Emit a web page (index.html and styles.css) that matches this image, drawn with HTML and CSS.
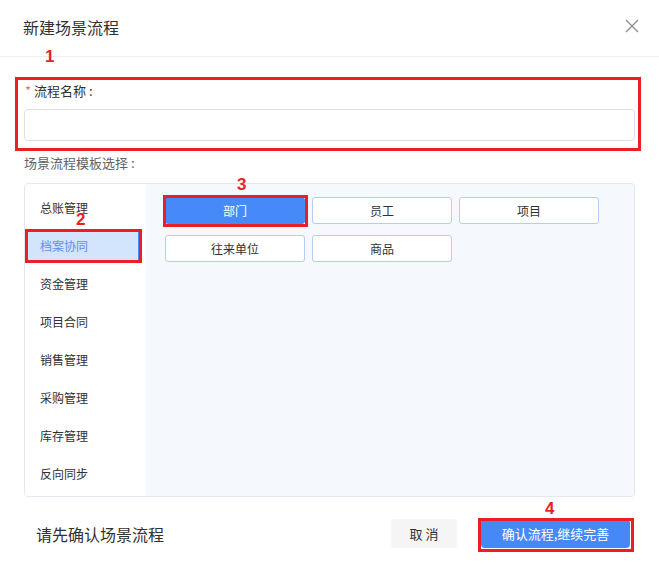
FILE: index.html
```html
<!DOCTYPE html>
<html lang="zh-CN">
<head>
    <meta charset="UTF-8">
    <title>新建场景流程</title>
    <link rel="stylesheet" href="styles.css">
</head>
<body>
<div class="dialog">
    <div class="dialog-header">
        <span class="dialog-title">新建场景流程</span>
        <svg class="close" width="14" height="14" viewBox="0 0 14 14">
            <path d="M1 1L13 13M13 1L1 13" stroke="#8c8c8c" stroke-width="1.3" fill="none"/>
        </svg>
    </div>

    <div class="dialog-body">
        <div class="form-item">
            <label class="form-label"><span class="req">*</span>流程名称 :</label>
            <input type="text" class="form-input">
        </div>

        <div class="tpl-label">场景流程模板选择 :</div>

        <div class="tpl-panel">
            <ul class="tpl-menu">
                <li>总账管理</li>
                <li class="active">档案协同</li>
                <li>资金管理</li>
                <li>项目合同</li>
                <li>销售管理</li>
                <li>采购管理</li>
                <li>库存管理</li>
                <li>反向同步</li>
            </ul>
            <div class="tpl-list">
                <button class="tpl-btn selected">部门</button>
                <button class="tpl-btn">员工</button>
                <button class="tpl-btn">项目</button>
                <button class="tpl-btn">往来单位</button>
                <button class="tpl-btn">商品</button>
            </div>
        </div>
    </div>

    <div class="dialog-footer">
        <span class="tip">请先确认场景流程</span>
        <div class="actions">
            <button class="btn btn-cancel">取 消</button>
            <button class="btn btn-primary">确认流程,继续完善</button>
        </div>
    </div>

    <!-- step marks -->
    <div class="mark-box box-1"></div>
    <div class="mark-num num-1">1</div>
    <div class="mark-box box-2"></div>
    <div class="mark-num num-2">2</div>
    <div class="mark-box box-3"></div>
    <div class="mark-num num-3">3</div>
    <div class="mark-box box-4"></div>
    <div class="mark-num num-4">4</div>
</div>
</body>
</html>
```

FILE: styles.css
```css
* {
    box-sizing: border-box;
}
body {
    margin: 0;
    background: #fff;
    font-family: "Noto Sans CJK SC", "Noto Sans", sans-serif;
    color: #303133;
}
.dialog {
    position: relative;
    width: 659px;
    height: 565px;
    background: #fff;
    border-radius: 8px;
}
.dialog-header {
    height: 57px;
    display: flex;
    align-items: center;
    justify-content: space-between;
    padding: 0 20px 2px 23px;
    border-bottom: 1px solid #ebeef2;
}
.dialog-title {
    font-size: 16px;
    color: #303133;
}
.close {
    margin-top: -2px;
}

.dialog-body {
    padding: 0 24px;
}
.form-item {
    padding-top: 26px;
}
.form-label {
    display: block;
    font-size: 13px;
    line-height: 16px;
    color: #303133;
    margin-left: 1px;
}
.req {
    color: #f56c6c;
    margin-right: 3px;
}
.form-input {
    display: block;
    width: 100%;
    height: 32px;
    margin-top: 10px;
    border: 1px solid #dcdfe6;
    border-radius: 4px;
    outline: none;
}
.tpl-label {
    margin-top: 13px;
    font-size: 13px;
    line-height: 18px;
    color: #606266;
}
.tpl-panel {
    margin-top: 11px;
    height: 314px;
    display: flex;
    border: 1px solid #e4e7ed;
    border-radius: 4px;
    overflow: hidden;
}
.tpl-menu {
    list-style: none;
    margin: 0;
    padding: 10px 0 0 3px;
    width: 121px;
    background: #fff;
}
.tpl-menu li {
    height: 28px;
    line-height: 28px;
    margin-bottom: 10px;
    padding-left: 12px;
    width: 112px;
    font-size: 12px;
    color: #303133;
}
.tpl-menu li.active {
    background: #d3e4fd;
    color: #5b8ff0;
    border-right: 2px solid #4a8af4;
}
.tpl-list {
    flex: 1;
    background: #f5f8fc;
    padding: 13px 0 0 19px;
    display: grid;
    grid-template-columns: repeat(3, 140px);
    grid-auto-rows: 27px;
    column-gap: 7px;
    row-gap: 11px;
    align-content: start;
}
.tpl-btn {
    border: 1px solid #b3cdf6;
    border-radius: 3px;
    background: #fff;
    font-family: inherit;
    font-size: 12px;
    color: #303133;
    padding: 0;
}
.tpl-btn.selected {
    background: #4689f8;
    border-color: #4689f8;
    color: #fff;
}

.dialog-footer {
    display: flex;
    align-items: center;
    justify-content: space-between;
    padding: 22px 29px 0 36px;
}
.tip {
    font-size: 16px;
    color: #303133;
}
.actions {
    display: flex;
    align-items: center;
    gap: 24px;
}
.btn {
    border: none;
    border-radius: 4px;
    font-family: inherit;
    font-size: 13px;
    height: 29px;
    padding: 0;
}
.btn-cancel {
    width: 66px;
    background: #f5f5f5;
    color: #303133;
}
.btn-primary {
    width: 149px;
    background: #4788f8;
    color: #fff;
}

/* red step marks drawn over the form */
.mark-box {
    position: absolute;
    border: 3px solid #e91e26;
}
.mark-num {
    position: absolute;
    font-family: "Liberation Sans", Arial, sans-serif;
    font-weight: bold;
    font-size: 17px;
    line-height: 1;
    color: #e91e26;
}
.box-1 { left: 15px; top: 77px; width: 626px; height: 74px; }
.num-1 { left: 45px; top: 48px; }
.box-2 { left: 25px; top: 229px; width: 117px; height: 34px; }
.num-2 { left: 76px; top: 211px; }
.box-3 { left: 163px; top: 195px; width: 145px; height: 32px; }
.num-3 { left: 237px; top: 176px; }
.box-4 { left: 478px; top: 518px; width: 156px; height: 34px; }
.num-4 { left: 545px; top: 500px; }
```
